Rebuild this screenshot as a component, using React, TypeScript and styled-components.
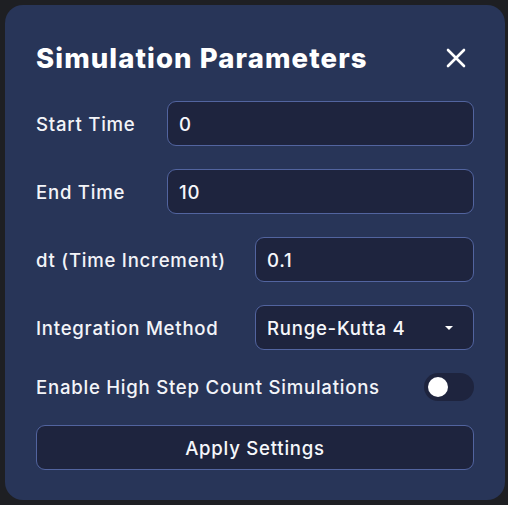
import React from "react";
import styled, { createGlobalStyle } from "styled-components";

const GlobalStyle = createGlobalStyle`
    html, body {
        margin: 0;
        padding: 0;
        background: #1e1f23;
    }
    * {
        box-sizing: border-box;
    }
`;

const Backdrop = styled.div`
    width: 508px;
    height: 505px;
    padding: 5px 3px 5px 5px;
    font-family: Inter, "Noto Sans", sans-serif;
    color: #f3f4f8;
`;

const Card = styled.div`
    width: 500px;
    height: 495px;
    background: #283558;
    border-radius: 18px;
    padding: 31px 31px 30px 31px;
    display: flex;
    flex-direction: column;
`;

const Header = styled.div`
    height: 44px;
    display: flex;
    align-items: center;
    justify-content: space-between;
    margin-bottom: 21px;
`;

const Title = styled.h2`
    margin: 0;
    font-size: 27.5px;
    font-weight: 800;
    letter-spacing: 1.1px;
    color: #ffffff;
`;

const CloseButton = styled.button`
    border: none;
    background: transparent;
    padding: 0;
    width: 30px;
    height: 30px;
    display: flex;
    align-items: center;
    justify-content: center;
    margin-right: 3px;
    color: #ffffff;
    cursor: pointer;
`;

const Form = styled.div`
    display: flex;
    flex-direction: column;
    gap: 23px;
`;

const Row = styled.div`
    display: flex;
    align-items: center;
`;

const textStyles = `
    font-family: Inter, "Noto Sans", sans-serif;
    font-size: 18.6px;
    font-weight: 500;
    letter-spacing: 0.75px;
`;

const Label = styled.label<{ $width?: number }>`
    ${textStyles}
    width: ${(p) => (p.$width ? `${p.$width}px` : "auto")};
    flex: ${(p) => (p.$width ? "none" : "1")};
    color: #f3f4f8;
    white-space: nowrap;
`;

const fieldStyles = `
    ${textStyles}
    flex: 1;
    height: 45px;
    background: #1e243e;
    border: 1px solid #52649f;
    border-radius: 9px;
    color: #f6f7fb;
    padding: 0 11px;
    outline: none;
`;

const Input = styled.input`
    ${fieldStyles}
    min-width: 0;
`;

const Select = styled.div`
    ${fieldStyles}
    display: flex;
    align-items: center;
    justify-content: space-between;
    padding-right: 20px;
`;

const Caret = styled.span`
    width: 0;
    height: 0;
    border-left: 4px solid transparent;
    border-right: 4px solid transparent;
    border-top: 4px solid #ffffff;
`;

const Toggle = styled.div`
    width: 50px;
    height: 28px;
    border-radius: 14px;
    background: #1e243e;
    padding: 4px;
    display: flex;
    align-items: center;
`;

const Knob = styled.span`
    width: 20px;
    height: 20px;
    border-radius: 50%;
    background: #ffffff;
`;

const ApplyButton = styled.button`
    ${textStyles}
    margin-top: 1px;
    height: 45px;
    width: 100%;
    background: #1e243e;
    border: 1px solid #52649f;
    border-radius: 9px;
    color: #f6f7fb;
    cursor: pointer;
`;

const fields = [
    { label: "Start Time", value: "0", width: 131 },
    { label: "End Time", value: "10", width: 131 },
    { label: "dt (Time Increment)", value: "0.1", width: 219 },
];

export default function App() {
    return (
        <>
            <GlobalStyle />
            <Backdrop>
                <Card>
                    <Header>
                        <Title>Simulation Parameters</Title>
                        <CloseButton aria-label="Close">
                            <svg width="20" height="20" viewBox="0 0 20 20">
                                <path
                                    d="M2 2 L18 18 M18 2 L2 18"
                                    stroke="currentColor"
                                    strokeWidth="2.6"
                                    strokeLinecap="round"
                                />
                            </svg>
                        </CloseButton>
                    </Header>
                    <Form>
                        {fields.map((f) => (
                            <Row key={f.label}>
                                <Label $width={f.width}>{f.label}</Label>
                                <Input defaultValue={f.value} />
                            </Row>
                        ))}
                        <Row>
                            <Label $width={219}>Integration Method</Label>
                            <Select>
                                <span>Runge-Kutta 4</span>
                                <Caret />
                            </Select>
                        </Row>
                        <Row>
                            <Label>Enable High Step Count Simulations</Label>
                            <Toggle>
                                <Knob />
                            </Toggle>
                        </Row>
                        <ApplyButton>Apply Settings</ApplyButton>
                    </Form>
                </Card>
            </Backdrop>
        </>
    );
}
